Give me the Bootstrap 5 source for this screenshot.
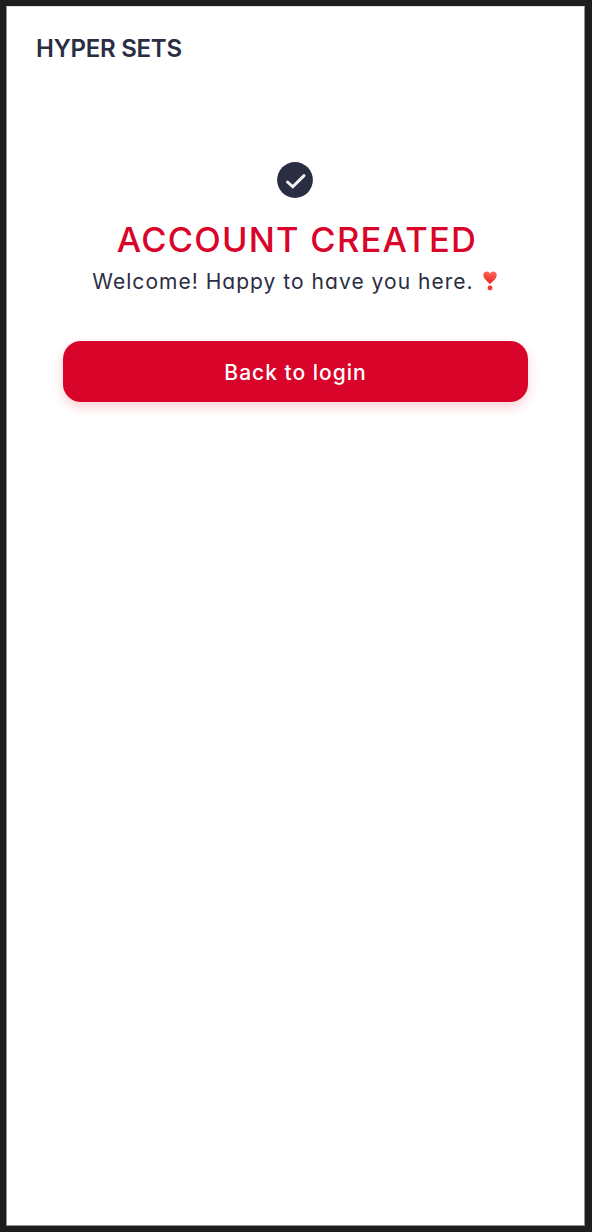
<!DOCTYPE html>
<html lang="en">
<head>
<meta charset="utf-8">
<meta name="viewport" content="width=device-width, initial-scale=1">
<title>Hyper Sets</title>
<link href="https://cdn.jsdelivr.net/npm/bootstrap@5.3.0/dist/css/bootstrap.min.css" rel="stylesheet">
<style>
  body { background: #1e1e1e; color: #2b2d42; font-family: Inter, "Liberation Sans", sans-serif; font-feature-settings: "cv11"; padding: 6px 7px 6px 6px; }
  .screen { height: 1220px; border: 1px solid #8f9290; border-top-color: #e0dedf; background: #fff; }
  .brand { font-size: 24px; line-height: 30px; font-weight: 600; padding: 27px 29px 0; letter-spacing: -.25px; }
  .status { padding: 98px 56px 0; }
  .check { margin-right: 1px; }
  .headline { color: #d90429; font-size: 34.5px; line-height: 44px; font-weight: 500; letter-spacing: 1.25px; margin-top: 20px; padding-left: 3px; }
  .welcome { font-size: 21px; line-height: 30px; font-weight: 400; letter-spacing: 1.03px; margin-top: 5px; }
  .heart { margin: 0 2px 3px 9px; }
  .btn-login { --bs-btn-color: #fff; --bs-btn-bg: #d90429; --bs-btn-hover-color: #fff; --bs-btn-hover-bg: #b90323; --bs-btn-border-width: 0; --bs-btn-border-radius: 18px; --bs-btn-font-size: 21px; --bs-btn-font-weight: 500; height: 61px; margin-top: 44px; padding-top: 9px; letter-spacing: 1px; box-shadow: 0 5px 12px rgba(239,35,60,.22); }
</style>
</head>
<body>
<main class="screen">
  <header class="brand">HYPER SETS</header>
  <section class="status d-flex flex-column align-items-center text-center">
    <svg class="check" width="36" height="36" viewBox="0 0 36 36" aria-hidden="true">
      <circle cx="18" cy="18" r="17.9" fill="#2b2d42"/>
      <path d="M10.500 20 15.800 24.800 27 13.600" fill="none" stroke="#f2f3f4" stroke-width="3" stroke-linecap="round"/>
    </svg>
    <h1 class="headline mb-0 text-nowrap">ACCOUNT CREATED</h1>
    <p class="welcome mb-0 d-flex align-items-center text-nowrap">
      <span>Welcome! Happy to have you here.</span>
      <svg class="heart" width="14" height="20" viewBox="0 0 14 20" role="img" aria-label="Heart exclamation">
        <defs><linearGradient id="heart" x2="0" y2="1"><stop stop-color="#ff6a5c"/><stop offset="1" stop-color="#e5231d"/></linearGradient></defs>
        <path d="M7 13C5 10.500.3 7.800.3 3.900.3 1.700 1.800.4 3.700.4 5.200.4 6.400 1.300 7 2.600 7.600 1.300 8.800.4 10.300.4 12.200.4 13.700 1.700 13.700 3.900 13.700 7.800 9 10.500 7 13Z" fill="url(#heart)"/>
        <circle cx="7" cy="17" r="2.400" fill="#f13a30"/>
      </svg>
    </p>
    <button type="button" class="btn btn-login w-100">Back to login</button>
  </section>
</main>
<script src="https://cdn.jsdelivr.net/npm/bootstrap@5.3.0/dist/js/bootstrap.bundle.min.js"></script>
</body>
</html>
